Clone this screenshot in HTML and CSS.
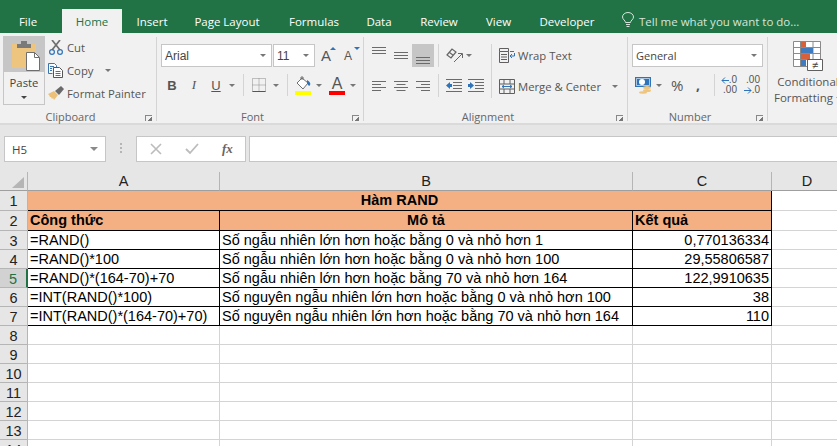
FILE: index.html
```html
<!DOCTYPE html>
<html lang="vi">
<head>
<meta charset="utf-8">
<title>Hàm RAND</title>
<link rel="stylesheet" href="styles.css">
</head>
<body>
<div class="app">
  <nav class="tabs">
    <span class="tab t-file">File</span>
    <span class="tab t-home">Home</span>
    <span class="tab t-insert">Insert</span>
    <span class="tab t-layout">Page Layout</span>
    <span class="tab t-form">Formulas</span>
    <span class="tab t-data">Data</span>
    <span class="tab t-review">Review</span>
    <span class="tab t-view">View</span>
    <span class="tab t-dev">Developer</span>
    <span class="tell">
      <svg class="bulb" width="12" height="15" viewBox="0 0 12 15"><path d="M3.500 10.500C3.500 8.500.5 7.500.5 5a5.500 4.500 0 0 1 11 0c0 2.500-3 3.500-3 5.500zM4 12.500h4M4.500 14.500h3" fill="none" stroke="#d5e5db" stroke-width="1"/></svg>
      <span>Tell me what you want to do...</span>
    </span>
  </nav>

  <section class="ribbon">
    <div class="group g-clip">
      <div class="group-body clip-body">
        <div class="paste">
          <div class="paste-top">
            <svg width="28" height="30" viewBox="0 0 28 30">
              <path d="M0 3h24v24H0z" fill="#eec57e"/>
              <path d="M5 3h4V0h6v3h4v4H5z" fill="#7a7a7a"/>
              <path d="M14.500 11.500h8l5 5v13h-13z" fill="#fff" stroke="#6e6e6e"/>
              <path d="M22.500 11.500v5h5" fill="none" stroke="#6e6e6e"/>
            </svg>
          </div>
          <div class="paste-bottom"><span>Paste</span><i class="caret dark"></i></div>
        </div>
        <div class="clip-list">
          <div class="clip-row">
            <svg width="16" height="15" viewBox="0 0 16 15"><path d="M4 0l8 10M12 0L4 10" stroke="#6f6f6f" stroke-width="1.700" fill="none"/><circle cx="4" cy="12" r="2.400" fill="none" stroke="#2f73b9" stroke-width="1.200"/><circle cx="12" cy="12" r="2.400" fill="none" stroke="#2f73b9" stroke-width="1.200"/></svg>
            <span>Cut</span>
          </div>
          <div class="clip-row">
            <svg width="16" height="15" viewBox="0 0 16 15"><path d="M.5.500h6l2 2v2M.5.500v10h4" fill="#fff" stroke="#3b75ad"/><path d="M5.500 4.500h6l3 3v7h-9z" fill="#fff" stroke="#555"/><path d="M7.500 8.500h5M7.500 10.500h5M7.500 12.500h5M2 3.500h4M2 5.500h2M2 7.500h2" stroke="#3b75ad"/></svg>
            <span>Copy</span><i class="caret c-copy"></i>
          </div>
          <div class="clip-row">
            <svg width="16" height="15" viewBox="0 0 16 15"><path d="M0 8l6-3 4 4-4 5-1-2-1 1-1-2-1 0-1-2z" fill="#ecc078"/><path d="M7 5l6-5 3 3-5 6z" fill="#6a6a6a"/></svg>
            <span>Format Painter</span>
          </div>
        </div>
      </div>
      <div class="group-label">Clipboard<i class="launcher"></i></div>
    </div>

    <div class="group g-font">
      <div class="group-body font-body">
        <div class="font-row1">
          <div class="combo c-fontname"><span>Arial</span><i class="caret"></i></div>
          <div class="combo c-size"><span>11</span><i class="caret"></i></div>
          <span class="grow-a big">A<i class="up"></i></span>
          <span class="grow-a small">A<i class="down"></i></span>
        </div>
        <div class="font-row2">
          <b class="fmt">B</b>
          <em class="fmt it">I</em>
          <u class="fmt un">U</u>
          <i class="caret c-u"></i>
          <i class="vsep s-a"></i>
          <svg class="borders" width="14" height="14" viewBox="0 0 14 14"><path d="M.5.500h13v13H.5zM7 .5v13M.5 7h13" fill="none" stroke="#8a8a8a" stroke-dasharray="1 1"/><path d="M.5 13.500h13" stroke="#555"/></svg>
          <i class="caret c-b"></i>
          <i class="vsep s-b"></i>
          <span class="fill">
            <svg width="17" height="15" viewBox="0 0 17 15"><path d="M7 2l6 5-5 6-6-6z" fill="#fff" stroke="#707070"/><path d="M6 4V1h2v3" fill="none" stroke="#707070"/><path d="M12 4c2 1 4 3 3 5s-2 0-3-2z" fill="#2f73b9"/></svg>
            <i class="bar yellow"></i>
          </span>
          <i class="caret c-f"></i>
          <span class="fcolor"><span>A</span><i class="bar red"></i></span>
          <i class="caret c-c"></i>
        </div>
      </div>
      <div class="group-label">Font<i class="launcher"></i></div>
    </div>

    <div class="group g-align">
      <div class="group-body align-body">
        <div class="align-grid">
          <div class="ai top"><svg width="14" height="7" viewBox="0 0 14 7"><path d="M0 .5h14M0 3.500h14M0 6.500h14" stroke="#6b6b6b"/></svg></div>
          <div class="ai mid"><svg width="14" height="7" viewBox="0 0 14 7"><path d="M0 .5h14M0 3.500h14M0 6.500h14" stroke="#6b6b6b"/></svg></div>
          <div class="ai on"><svg width="14" height="7" viewBox="0 0 14 7"><path d="M0 .5h14M0 3.500h14M0 6.500h14" stroke="#6b6b6b"/></svg></div>
          <div class="ai"><svg width="14" height="10" viewBox="0 0 14 10"><path d="M0 .5h14M0 3.500h9M0 6.500h14M0 9.500h9" stroke="#6b6b6b"/></svg></div>
          <div class="ai"><svg width="14" height="10" viewBox="0 0 14 10"><path d="M0 .5h14M2.500 3.500h9M0 6.500h14M2.500 9.500h9" stroke="#6b6b6b"/></svg></div>
          <div class="ai"><svg width="14" height="10" viewBox="0 0 14 10"><path d="M0 .5h14M5 3.500h9M0 6.500h14M5 9.500h9" stroke="#6b6b6b"/></svg></div>
        </div>
        <div class="sep-pair"><i class="vsep"></i><i class="vsep"></i></div>
        <div class="align-mid">
          <div class="orient">
            <svg width="17" height="17" viewBox="0 0 17 17"><path d="M1 8l5-6 4 3-5 6zM3.500 5.500l4 3" fill="none" stroke="#666" stroke-width="1.200"/><path d="M8 15l8-8M12 6.500h4.500V11" fill="none" stroke="#666"/></svg>
            <i class="caret"></i>
          </div>
          <div class="indent">
            <svg width="16" height="13" viewBox="0 0 16 13"><path d="M0 .5h16M7 3.500h9M7 6.500h9M7 9.500h9M0 12.500h16" stroke="#6b6b6b"/><path d="M0 6.500l4-3.500v2h2v3H4v2z" fill="#2f73b9"/></svg>
            <svg width="16" height="13" viewBox="0 0 16 13"><path d="M0 .5h16M7 3.500h9M7 6.500h9M7 9.500h9M0 12.500h16" stroke="#6b6b6b"/><path d="M6 6.500L2 3v2H0v3h2v2z" fill="#2f73b9"/></svg>
          </div>
        </div>
        <i class="vsep tall"></i>
        <div class="align-wrap">
          <div class="wrap-row r1">
            <svg width="16" height="15" viewBox="0 0 16 15"><path d="M.5.500h9v3h-9zM.5 3.500v11h9v-11M2 6.500h6M2 9h6M2 11.500h6" fill="none" stroke="#5f5f5f"/><path d="M11 3.500h4M15.500 5v3h-4M13 6l-2 2 2 2" fill="none" stroke="#2f73b9"/></svg>
            <span>Wrap Text</span>
          </div>
          <div class="wrap-row r2">
            <svg width="16" height="15" viewBox="0 0 16 15"><path d="M.5.500h15v14H.5zM.5 5h15M.5 10h15M5 .5V5M11 .5V5M5 10v4.500M11 10v4.500" fill="none" stroke="#5f5f5f"/><path d="M3 7.500h10M5 6L3 7.500 5 9M11 6l2 1.500L11 9" fill="none" stroke="#2f73b9"/></svg>
            <span>Merge &amp; Center</span><i class="caret c-merge"></i>
          </div>
        </div>
      </div>
      <div class="group-label">Alignment<i class="launcher"></i></div>
    </div>

    <div class="group g-num">
      <div class="group-body num-body">
        <div class="combo c-general"><span>General</span><i class="caret"></i></div>
        <div class="num-row">
          <svg width="17" height="17" viewBox="0 0 17 17"><path d="M0 0h16v10H0z" fill="#2f73b9"/><path d="M1.500 1.500h13v7h-13z" fill="none" stroke="#fff" stroke-width=".6"/><circle cx="7" cy="5" r="3" fill="#fff"/><ellipse cx="12" cy="10.500" rx="4" ry="1.500" fill="#eec57e"/><ellipse cx="12" cy="13.500" rx="4" ry="1.500" fill="#eec57e"/><ellipse cx="8" cy="15.500" rx="4" ry="1.200" fill="#eec57e"/></svg>
          <i class="caret c-cur"></i>
          <span class="pct">%</span>
          <b class="comma">,</b>
          <i class="vsep s-n"></i>
          <span class="dec"><span class="dl"><svg width="8" height="7" viewBox="0 0 8 7"><path d="M8 3.500H1M4 .5l-3 3 3 3" fill="none" stroke="#2f73b9"/></svg>.0</span><span>.00</span></span>
          <span class="dec d2"><span>.00</span><span class="dl"><svg width="8" height="7" viewBox="0 0 8 7"><path d="M0 3.500h7M4 .5l3 3-3 3" fill="none" stroke="#2f73b9"/></svg>.0</span></span>
        </div>
      </div>
      <div class="group-label">Number<i class="launcher"></i></div>
    </div>

    <div class="group g-cond">
      <svg class="cond-icon" width="30" height="30" viewBox="0 0 30 30">
        <path d="M.5.500h27v25H.5zM.5 6.500h27M.5 12.500h27M.5 18.500h27M7.500 .5v25M20 .5v25" fill="#fff" stroke="#8a8a8a"/>
        <path d="M8 1h5v5H8zM8 13h9v5H8z" fill="#d9613a"/>
        <path d="M8 7h12v5H8zM8 19h5v6H8z" fill="#3f7cbf"/>
        <path d="M14.500 18.500h15v11h-15z" fill="#fff" stroke="#5f5f5f"/>
      </svg>
      <span class="neq">≠</span>
      <span class="cond-text">Conditional<br>Formatting <i class="caret inl"></i></span>
    </div>
  </section>

  <section class="formula">
    <div class="namebox"><span>H5</span><i class="caret"></i></div>
    <div class="dots"><i></i></div>
    <div class="fx-box">
      <svg width="12" height="12" viewBox="0 0 12 12"><path d="M1 1l10 10M11 1L1 11" stroke="#bcbcbc" stroke-width="1.600"/></svg>
      <svg width="14" height="12" viewBox="0 0 14 12"><path d="M1 6l4 4 8-9" fill="none" stroke="#bcbcbc" stroke-width="1.800"/></svg>
      <em class="fx">fx</em>
    </div>
    <div class="input"></div>
  </section>

  <section class="sheet">
    <div class="corner"><i></i></div>
    <div class="ch">A</div><div class="ch">B</div><div class="ch">C</div><div class="ch last">D</div>

    <div class="rh">1</div>
    <div class="cell head merged">Hàm RAND</div>
    <div class="cell"></div>

    <div class="rh">2</div>
    <div class="cell head left">Công thức</div>
    <div class="cell head">Mô tả</div>
    <div class="cell head left">Kết quả</div>
    <div class="cell"></div>

    <div class="rh">3</div>
    <div class="cell d">=RAND()</div>
    <div class="cell d">Số ngẫu nhiên lớn hơn hoặc bằng 0 và nhỏ hơn 1</div>
    <div class="cell d num">0,770136334</div>
    <div class="cell"></div>

    <div class="rh">4</div>
    <div class="cell d">=RAND()*100</div>
    <div class="cell d">Số ngẫu nhiên lớn hơn hoặc bằng 0 và nhỏ hơn 100</div>
    <div class="cell d num">29,55806587</div>
    <div class="cell"></div>

    <div class="rh sel">5</div>
    <div class="cell d">=RAND()*(164-70)+70</div>
    <div class="cell d">Số ngẫu nhiên lớn hơn hoặc bằng 70 và nhỏ hơn 164</div>
    <div class="cell d num">122,9910635</div>
    <div class="cell"></div>

    <div class="rh">6</div>
    <div class="cell d">=INT(RAND()*100)</div>
    <div class="cell d">Số nguyên ngẫu nhiên lớn hơn hoặc bằng 0 và nhỏ hơn 100</div>
    <div class="cell d num">38</div>
    <div class="cell"></div>

    <div class="rh">7</div>
    <div class="cell d">=INT(RAND()*(164-70)+70)</div>
    <div class="cell d">Số nguyên ngẫu nhiên lớn hơn hoặc bằng 70 và nhỏ hơn 164</div>
    <div class="cell d num">110</div>
    <div class="cell"></div>

    <div class="rh">8</div><div class="cell"></div><div class="cell"></div><div class="cell"></div><div class="cell"></div>
    <div class="rh">9</div><div class="cell"></div><div class="cell"></div><div class="cell"></div><div class="cell"></div>
    <div class="rh">10</div><div class="cell"></div><div class="cell"></div><div class="cell"></div><div class="cell"></div>
    <div class="rh">11</div><div class="cell"></div><div class="cell"></div><div class="cell"></div><div class="cell"></div>
    <div class="rh">12</div><div class="cell"></div><div class="cell"></div><div class="cell"></div><div class="cell"></div>
    <div class="rh">13</div><div class="cell"></div><div class="cell"></div><div class="cell"></div><div class="cell"></div>
    <div class="rh">14</div><div class="cell"></div><div class="cell"></div><div class="cell"></div><div class="cell"></div>
  </section>
</div>
</body>
</html>
```

FILE: styles.css
```css
* { box-sizing: border-box; }
html, body { margin: 0; padding: 0; }
body { width: 837px; height: 446px; overflow: hidden; background: #fff; font-family: "Open Sans", "Noto Sans", sans-serif; color: #444; }
i { display: block; font-style: normal; }
.app { width: 837px; height: 446px; overflow: hidden; display: flex; flex-direction: column; }

/* Tabs */
.tabs { flex: none; height: 33px; background: #217346; display: flex; align-items: flex-end; color: #fff; font-size: 11.500px; }
.tab { height: 24px; line-height: 25px; display: block; text-align: center; white-space: nowrap; }
.t-file { width: 62px; padding-right: 6px; }
.t-home { width: 60px; background: #f1f1f1; color: #217346; }
.t-insert { width: 60px; }
.t-layout { width: 90px; }
.t-form { width: 84px; }
.t-data { width: 46px; }
.t-review { width: 74px; }
.t-view { width: 45px; }
.t-dev { width: 92px; }
.tell { display: flex; align-items: center; gap: 5px; height: 24px; line-height: 25px; margin-left: 9px; color: #d5e5db; white-space: nowrap; }
.bulb { margin-top: -3px; }

/* Ribbon */
.ribbon { flex: none; height: 92px; background: #f1f1f1; border-bottom: 2px solid #dadada; display: flex; }
.group { flex: none; height: 84px; margin-top: 4px; border-right: 1px solid #d4d4d4; display: flex; flex-direction: column; position: relative; }
.group-body { flex: 1; min-height: 0; }
.group-label { flex: none; height: 15px; line-height: 22px; padding-right: 15px; text-align: center; font-size: 11px; color: #666; position: relative; }
.launcher { position: absolute; right: 4px; top: 9px; width: 7px; height: 6px; border-left: 1px solid #888; border-top: 1px solid #888; background: linear-gradient(135deg, transparent 55%, #777 55%); }
.caret { width: 0; height: 0; border-left: 3px solid transparent; border-right: 3px solid transparent; border-top: 3px solid #777; flex: none; }
.caret.dark { border-top-color: #444; }
.caret.inl { display: inline-block; vertical-align: middle; }

.g-clip { width: 157px; }
.clip-body { display: flex; padding: 0 0 0 3px; }
.paste { width: 42px; height: 69px; margin-top: -1px; border: 1px solid #c6c6c6; display: flex; flex-direction: column; }
.paste-top { flex: none; height: 35px; background: #c6c6c6; padding: 4px 0 0 8px; }
.paste-top svg { display: block; }
.paste-bottom { flex: 1; display: flex; flex-direction: column; align-items: center; font-size: 11.300px; color: #444; padding-top: 3px; line-height: 15px; gap: 6px; }
.clip-list { margin: -1px 0 0 3px; width: 104px; display: flex; flex-direction: column; }
.clip-row { height: 23px; display: flex; align-items: center; gap: 3px; font-size: 11.300px; color: #555; white-space: nowrap; }
.c-copy { margin-left: 9px; }

.g-font { width: 207px; }
.font-body { padding: 7px 0 0 4px; }
.font-row1 { display: flex; align-items: center; height: 23px; }
.combo { height: 23px; background: #fff; border: 1px solid #c6c6c6; display: flex; align-items: center; justify-content: space-between; padding: 0 5px 0 3px; font-size: 11px; color: #444; }
.c-fontname { width: 111px; font-family: "Liberation Sans", sans-serif; font-size: 12px; }
.c-size { width: 42px; margin-left: 1px; font-family: "Liberation Sans", sans-serif; font-size: 12px; }
.grow-a { display: block; position: relative; line-height: 16px; color: #555; font-family: "Liberation Sans", sans-serif; }
.big { margin-left: 6px; font-size: 15px; width: 14px; height: 16px; }
.small { margin-left: 9px; font-size: 12px; width: 13px; height: 16px; }
.up, .down { position: absolute; width: 0; height: 0; border-left: 3px solid transparent; border-right: 3px solid transparent; }
.up { right: -1px; top: -1px; border-bottom: 3px solid #2f73b9; }
.down { right: -3px; top: -1px; border-top: 3px solid #2f73b9; }
.font-row2 { display: flex; align-items: center; height: 22px; margin-top: 7px; font-family: "Liberation Sans", sans-serif; font-size: 13px; color: #555; }
.fmt { width: 22px; display: block; text-align: center; }
.it { font-family: "Liberation Serif", serif; }
.c-u { margin-left: 2px; }
.vsep { width: 1px; background: #d4d4d4; flex: none; }
.font-row2 .vsep { height: 22px; }
.s-a { margin-left: 8px; margin-right: 8px; }
.c-b { margin-left: 7px; }
.s-b { margin-left: 8px; margin-right: 7px; }
.fill { display: flex; flex-direction: column; align-items: center; width: 16px; }
.bar { width: 16px; height: 4px; }
.yellow { background: #ff0; }
.red { background: #f00; }
.c-f { margin-left: 5px; }
.fcolor { display: flex; flex-direction: column; align-items: center; width: 16px; margin-left: 7px; font-size: 16px; line-height: 15px; }
.c-c { margin-left: 5px; }

.g-align { width: 264px; }
.align-body { display: flex; padding: 7px 0 0 4px; }
.align-grid { width: 66px; height: 61px; display: grid; grid-template-columns: repeat(3, 22px); grid-template-rows: 23px 38px; }
.ai { display: flex; align-items: center; justify-content: center; padding-bottom: 1px; }
.ai.top { align-items: flex-start; padding: 3px 0 0; }
.ai.mid { align-items: flex-start; padding: 8px 0 0; }
.ai.on { background: #c6c6c6; align-items: flex-end; padding: 0 0 3px; }
.sep-pair { flex: none; width: 1px; height: 53px; margin: 0 7px 0 4px; display: flex; flex-direction: column; justify-content: space-between; }
.sep-pair .vsep { height: 23px; }
.tall { height: 54px; margin: 0 7px 0 7px; }
.align-mid { width: 38px; display: flex; flex-direction: column; }
.orient { height: 23px; display: flex; align-items: center; gap: 3px; }
.indent { height: 38px; display: flex; align-items: center; gap: 6px; padding-bottom: 1px; }
.align-wrap { display: flex; flex-direction: column; }
.wrap-row { display: flex; align-items: center; gap: 3px; font-size: 11.300px; color: #555; white-space: nowrap; }
.r1 { height: 23px; }
.r2 { height: 38px; }
.c-merge { margin-left: 8px; }

.g-num { width: 140px; }
.num-body { padding: 7px 0 0 4px; }
.c-general { width: 131px; font-family: "Open Sans", sans-serif; font-size: 11px; }
.num-row { display: flex; align-items: center; height: 22px; margin-top: 7px; padding-left: 3px; color: #555; }
.c-cur { margin-left: 4px; }
.pct { font-size: 15px; margin-left: 9px; width: 13px; }
.comma { font-size: 14px; margin-left: 12px; line-height: 10px; width: 4px; }
.s-n { height: 22px; margin: 0 7px 0 14px; }
.dec { display: flex; flex-direction: column; align-items: flex-end; font-size: 10px; line-height: 10px; font-family: "Liberation Sans", sans-serif; width: 15px; }
.d2 { margin-left: 8px; }
.dl { display: flex; align-items: center; }

.g-cond { width: 80px; border-right: 0; position: relative; display: flex; flex-direction: column; align-items: center; padding-top: 4px; }
.cond-icon { flex: none; }
.neq { position: absolute; left: 44px; top: 22px; font-size: 11px; line-height: 12px; color: #444; font-family: "Liberation Sans", sans-serif; }
.cond-text { font-size: 11.500px; line-height: 16px; color: #555; text-align: center; white-space: nowrap; margin-top: 3px; }

/* Formula bar */
.formula { flex: none; height: 47px; background: #e6e6e6; display: flex; padding: 11px 0 0 4px; }
.namebox { width: 102px; height: 26px; background: #fff; border: 1px solid #c6c6c6; display: flex; align-items: center; justify-content: space-between; padding: 0 7px; font-size: 11.500px; color: #444; }
.namebox .caret { border-left-width: 4px; border-right-width: 4px; border-top-width: 4px; border-top-color: #8a8a8a; }
.dots { width: 30px; padding: 7px 0 0 14px; }
.dots i { width: 2px; height: 11px; background: repeating-linear-gradient(#b5b5b5 0 2px, transparent 2px 4px); }
.fx-box { width: 110px; height: 26px; background: #fff; border: 1px solid #c6c6c6; display: flex; align-items: center; gap: 23px; padding-left: 13px; }
.fx { font-family: "Liberation Serif", serif; font-size: 13px; font-weight: 700; color: #666; }
.input { flex: 1; height: 26px; margin-left: 3px; background: #fff; border: 1px solid #c6c6c6; border-right: 0; }

/* Sheet */
.sheet { flex: 1; display: grid; grid-template-columns: 28px 192px 413px 139px 70px; grid-template-rows: 19px 20px 20px repeat(12, 19px); background: #fff; font-family: "Liberation Sans", sans-serif; font-size: 14.500px; color: #000; }
.corner { background: #e6e6e6; border-right: 1px solid #b5b5b5; border-bottom: 1px solid #9f9f9f; display: flex; justify-content: flex-end; align-items: flex-end; padding: 0 3px 2px 0; }
.corner i { width: 0; height: 0; border-left: 12px solid transparent; border-bottom: 11px solid #b5b5b5; }
.ch { background: #e6e6e6; border-right: 1px solid #b5b5b5; border-bottom: 1px solid #9f9f9f; text-align: center; line-height: 19px; color: #222; font-size: 14.500px; }
.ch.last { border-right: 0; }
.rh { background: #e6e6e6; border-right: 1px solid #b5b5b5; border-bottom: 1px solid #b5b5b5; text-align: center; line-height: 20px; color: #222; font-size: 14.500px; }
.rh.sel { background: #d2d2d2; color: #217346; border-right: 2px solid #217346; }
.cell { border-right: 1px solid #d4d4d4; border-bottom: 1px solid #d4d4d4; padding: 0 2px; line-height: 18px; white-space: nowrap; overflow: hidden; }
.head { background: #f4b083; font-weight: 700; text-align: center; border-right-color: #000; border-bottom-color: #000; }
.head.left { text-align: left; }
.merged { grid-column: span 3; }
.d { border-right-color: #000; border-bottom-color: #000; }
.num { text-align: right; }
```
